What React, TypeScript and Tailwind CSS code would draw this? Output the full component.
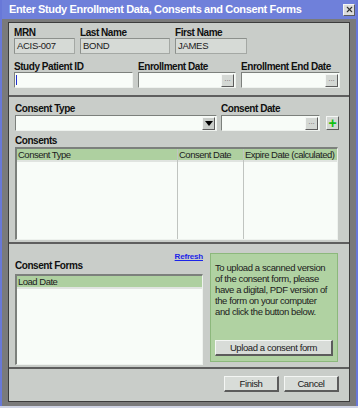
import { X } from 'lucide-react';

const sunken = 'border-t border-l border-t-[#7c807c] border-l-[#7c807c] border-b border-r border-b-[#eef2ee] border-r-[#eef2ee]';
const raised = 'border-t border-l border-t-[#f4f6f4] border-l-[#f4f6f4] border-b border-r border-b-[#5c5c5c] border-r-[#5c5c5c]';

function Label({ children }: { children: React.ReactNode }) {
  return <div className="text-[10px] font-bold leading-[10px] tracking-[-0.45px] text-[#101010] h-[10px]">{children}</div>;
}

function ReadOnly({ value, w }: { value: string; w: string }) {
  return (
    <div className={`${w} h-[16px] bg-[#d6dad6] border border-[#a4a8a4] border-t-[#8c908c] border-l-[#8c908c] text-[9.5px] leading-[14px] tracking-[-0.3px] pl-[2px] text-[#202020]`}>
      {value}
    </div>
  );
}

function DateBox({ w }: { w: string }) {
  return (
    <div className={`${w} h-[16px] bg-[#f8fcf8] ${sunken} flex justify-end items-center`}>
      <div className={`w-[13px] h-[13px] mr-[1px] bg-[#d4d8d4] ${raised} text-[8px] leading-[7px] text-[#707070] flex justify-center`}>...</div>
    </div>
  );
}

function Button({ label, w }: { label: string; w: string }) {
  return (
    <div className={`${w} h-[16px] bg-[#d8dcd8] ${raised} border-b-[2px] border-r-[2px] text-[9.5px] leading-[13px] tracking-[-0.4px] text-[#202020] flex justify-center`}>
      {label}
    </div>
  );
}

function HeaderCell({ children }: { children: React.ReactNode }) {
  return (
    <div className="h-[13px] bg-[#aed0a0] border-b-[2px] border-[#e0e4e0] text-[9.5px] leading-[12px] tracking-[-0.5px] text-[#202020] pl-[1px] whitespace-nowrap overflow-hidden">
      {children}
    </div>
  );
}

const uploadLines = [
  'To upload a scanned version',
  'of the consent form, please',
  'have a digital, PDF version of',
  'the form on your computer',
  'and click the button below.',
];

export default function App() {
  return (
    <div className="w-[358px] h-[408px] bg-[#d0d4e4] font-['Liberation_Sans',Arial,sans-serif] select-none">
      <div className="h-[406px] bg-[#6878d8] flex flex-col px-[2px]">
        {/* Title bar */}
        <div className="h-[19px] bg-[#6f80da] flex items-center justify-between pl-[7px] pr-[1px]">
          <span className="text-white text-[11px] font-bold tracking-[-0.35px]">Enter Study Enrollment Data, Consents and Consent Forms</span>
          <div className={`w-[12px] h-[12px] bg-[#dcdcdc] ${raised} flex items-center justify-center`}>
            <X size={9} strokeWidth={3} className="text-[#303030]" />
          </div>
        </div>

        {/* Gray frame */}
        <div className="flex-1 bg-[#7a7a7a] pt-[3px] px-[6px] pb-[4px] flex">
          <div className="flex-1 bg-[#c9cdc9] border border-[#3c3c3c] flex flex-col">

            {/* Section 1 */}
            <div className="h-[74px] border-b-[2px] border-[#5e5e5e] pl-[5px] pt-[5px]">
              <div className="flex gap-[5px]">
                <div className="flex flex-col"><Label>MRN</Label><ReadOnly value="ACIS-007" w="w-[61px]" /></div>
                <div className="flex flex-col"><Label>Last Name</Label><ReadOnly value="BOND" w="w-[90px]" /></div>
                <div className="flex flex-col"><Label>First Name</Label><ReadOnly value="JAMES" w="w-[72px]" /></div>
              </div>
              <div className="flex gap-[5px] mt-[8px]">
                <div className="flex flex-col">
                  <Label>Study Patient ID</Label>
                  <div className={`w-[119px] h-[16px] bg-[#f8fcf8] ${sunken} pl-[1px] pt-[2px]`}>
                    <div className="w-[1px] h-[10px] bg-[#2030d0]" />
                  </div>
                </div>
                <div className="flex flex-col"><Label>Enrollment Date</Label><DateBox w="w-[98px]" /></div>
                <div className="flex flex-col"><Label>Enrollment End Date</Label><DateBox w="w-[99px]" /></div>
              </div>
            </div>

            {/* Section 2 */}
            <div className="h-[147px] border-b-[2px] border-[#5e5e5e] pl-[6px] pt-[7px]">
              <div className="flex items-end">
                <div className="flex flex-col gap-[1px]">
                  <Label>Consent Type</Label>
                  <div className={`w-[202px] h-[16px] bg-[#f8fcf8] ${sunken} flex justify-end items-center`}>
                    <div className={`w-[13px] h-[13px] mr-[1px] bg-[#c9cdc9] ${raised} flex items-center justify-center`}>
                      <div className="w-0 h-0 border-l-[4px] border-r-[4px] border-t-[5px] border-l-transparent border-r-transparent border-t-[#000]" />
                    </div>
                  </div>
                </div>
                <div className="flex flex-col gap-[1px] ml-[4px]"><Label>Consent Date</Label><DateBox w="w-[99px]" /></div>
                <div className={`w-[13px] h-[14px] ml-[6px] mb-[1px] bg-[#d4d8d4] ${raised} flex items-center justify-center text-[#10c010] text-[14px] font-bold leading-[10px]`}>+</div>
              </div>
              <div className="mt-[5px]"><Label>Consents</Label></div>
              <div className={`mt-[1px] w-[323px] h-[93px] bg-[#f8fcf8] ${sunken} border-t-[2px] border-l-[2px] flex`}>
                <div className="w-[161px] shrink-0 border-r border-[#c0c4c0] flex flex-col">
                  <HeaderCell>Consent Type</HeaderCell>
                </div>
                <div className="w-[66px] shrink-0 border-r border-[#c0c4c0] flex flex-col">
                  <HeaderCell>Consent Date</HeaderCell>
                </div>
                <div className="flex-1 min-w-0 flex flex-col">
                  <HeaderCell>Expire Date (calculated)</HeaderCell>
                </div>
              </div>
            </div>

            {/* Section 3 */}
            <div className="h-[125px] border-b-[2px] border-[#5e5e5e] pl-[6px] pt-[9px] flex">
              <div className="w-[188px] flex flex-col">
                <div className="flex justify-end h-[7px]">
                  <span className="text-[8px] font-bold leading-[8px] text-[#1c24e8] underline tracking-[-0.2px]">Refresh</span>
                </div>
                <div className="mt-[1px]"><Label>Consent Forms</Label></div>
                <div className={`mt-[3px] w-[188px] h-[91px] bg-[#f8fcf8] ${sunken} border-t-[2px] border-l-[2px]`}>
                  <HeaderCell>Load Date</HeaderCell>
                </div>
              </div>
              <div className="ml-[7px] w-[128px] h-[109px] bg-[#b0d2a2] border border-[#8cb87c] pl-[4px] pt-[8px] flex flex-col">
                <div className="text-[9.5px] leading-[11px] tracking-[-0.4px] text-[#202020] whitespace-nowrap">
                  {uploadLines.map((l) => (
                    <div key={l}>{l}</div>
                  ))}
                </div>
                <div className="mt-auto mb-[5px]"><Button label="Upload a consent form" w="w-[118px]" /></div>
              </div>
            </div>

            {/* Section 4 */}
            <div className="flex-1 flex justify-end items-start pt-[7px] pr-[10px] gap-[5px]">
              <Button label="Finish" w="w-[55px]" />
              <Button label="Cancel" w="w-[55px]" />
            </div>
          </div>
        </div>
      </div>
    </div>
  );
}
